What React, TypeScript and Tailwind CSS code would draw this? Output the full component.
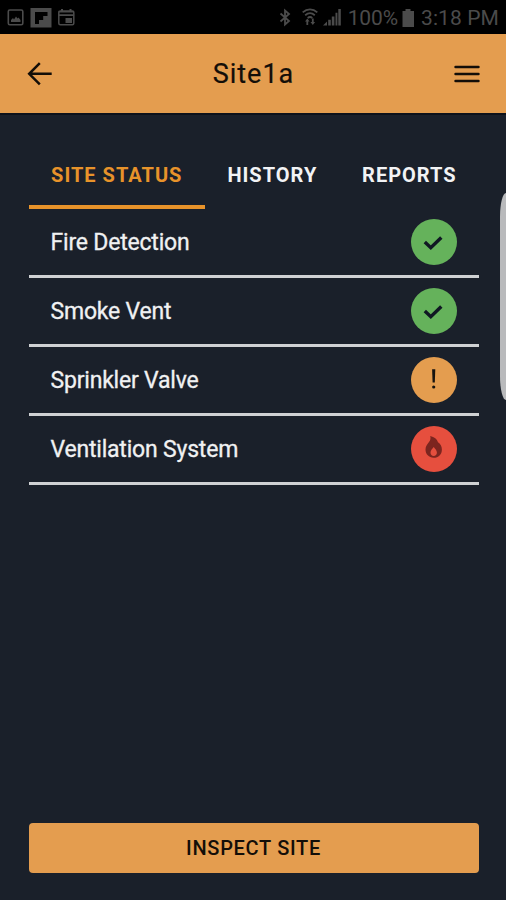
import type { ReactNode } from 'react';

const tabs = [
  { label: 'SITE STATUS', active: true },
  { label: 'HISTORY', active: false },
  { label: 'REPORTS', active: false },
];

const systems = [
  { name: 'Fire Detection', status: 'ok' },
  { name: 'Smoke Vent', status: 'ok' },
  { name: 'Sprinkler Valve', status: 'warning' },
  { name: 'Ventilation System', status: 'alarm' },
];

const statusColors: Record<string, string> = {
  ok: 'bg-[#65b25b]',
  warning: 'bg-[#e49d4f]',
  alarm: 'bg-[#e64f3e]',
};

const statusIcons: Record<string, ReactNode> = {
  ok: (
    <path
      d="M13.8 23l6 5.7 10.5-10.2"
      fill="none"
      stroke="#101823"
      strokeWidth="3.4"
    />
  ),
  warning: (
    <g fill="#17130f">
      <path d="M21.1 12.3h3.2l-.5 13.2h-2.2z" />
      <circle cx="22.7" cy="30" r="1.6" />
    </g>
  ),
  alarm: (
    <path
      fillRule="evenodd"
      fill="#7c251f"
      d="M19.2 10c4.2 1 6.8 3.2 7.8 6.2 2.4 1.5 3.9 4 3.9 7.2 0 4.9-3.4 8.4-8.2 8.4s-8.2-3.5-8.2-8.2c0-3.3 1.7-5.4 3.5-7.6 1.4-1.7 1.9-3.7 1.2-6zm3.5 11c-1.7 2-3.2 3.7-3.2 5.8 0 1.9 1.4 3.2 3.2 3.2s3.2-1.3 3.2-3.2c0-2.1-1.5-3.8-3.2-5.8z"
    />
  ),
};

const StatusBar = () => (
  <div className="flex h-[34px] items-center justify-between bg-black pt-[2px] pr-[7px] pl-[7px] text-[#4b4b4b]">
    <svg width="70" height="22" viewBox="0 0 70 22" fill="none">
      <rect x="1.3" y="3" width="14.5" height="14.8" rx="1.5" stroke="currentColor" strokeWidth="1.6" />
      <path d="M4 15v-2l2-2 1 1.5L9 9.5l1.5 2 1-1 2 2.5v2z" fill="currentColor" />
      <path d="M23.5 1h21v19.5h-21z" fill="currentColor" />
      <path d="M28 5h12.5v4h-4.3v4H32v4h-4z" fill="black" />
      <rect x="51.8" y="4" width="15" height="13.8" rx="1.5" stroke="currentColor" strokeWidth="1.5" />
      <path d="M51.5 4h15.6v1.5H51.5zM51.5 7.3h15.6v1.8H51.5zM54 2h2v3h-2zM62.5 2h2v3h-2zM58.5 11h6.5v5h-6.5z" fill="currentColor" />
    </svg>
    <div className="flex items-center">
      <svg width="66" height="22" viewBox="0 0 66 22" fill="none">
        <path d="M1.5 6.5l8.5 7.5-4 3.5v-14l4 3.5-8.5 7.5" stroke="currentColor" strokeWidth="1.8" />
        <path d="M23.7 5.4c4.4-4 10.2-4 14.6 0M26.2 8.2c3-2.6 6.6-2.6 9.6 0M28.7 11c1.4-1.2 3.2-1.2 4.6 0" stroke="currentColor" strokeWidth="1.8" />
        <path d="M26 14.6l2.3-3 2.3 3h-1.4V18h-1.8v-3.4zM31.5 15h1.4v-3.4h1.8V15h1.4l-2.3 3z" fill="currentColor" />
        <path d="M44 18.5l4-4v4zM49.2 12.8h2.6v5.7h-2.6zM52.8 9.5h2.6v9h-2.6zM56.5 5.8h1.9v12.7h-1.9zM59.3 2h2.5v16.5h-2.5z" fill="currentColor" />
      </svg>
      <span className="ml-[3px] pt-[2px] text-[21px] tracking-[-0.1px]">100%</span>
      <svg width="13" height="20" viewBox="0 0 13 20" className="ml-[4px]">
        <path d="M3.5 1h5v2H12v16H.5V3h3z" fill="currentColor" />
      </svg>
      <span className="ml-[6px] pt-[2px] text-[21px] tracking-[0.1px]">3:18 PM</span>
    </div>
  </div>
);

const Header = () => (
  <header className="flex h-[79px] items-center justify-between bg-[#e49d4f] pr-[26px] pl-[27px] text-[#130e08]">
    <svg width="26" height="26" viewBox="0 0 26 26" fill="none" stroke="currentColor" strokeWidth="2.5">
      <path d="M24.7 12.8H2.5M12.8 2.2L2.2 12.8l10.6 10.6" />
    </svg>
    <h1 className="pt-px text-[27px] tracking-[1px] [-webkit-text-stroke:0.2px_#130e08]">Site1a</h1>
    <svg width="26" height="26" viewBox="0 0 26 26" fill="none" stroke="currentColor" strokeWidth="2.4" strokeLinecap="round">
      <path d="M1.5 6h23M1.5 13h23M1.5 20h23" />
    </svg>
  </header>
);

const App = () => {
  return (
    <div className="relative flex h-[900px] w-[506px] flex-col overflow-hidden bg-[#1a202a] font-[Roboto,sans-serif]">
      <StatusBar />
      <Header />
      <div className="h-[2px] bg-[#0d121b]" />
      <main className="flex flex-1 flex-col pt-[26px] pr-[27.5px] pb-[27.5px] pl-[28.5px]">
        <nav className="flex h-[68px] w-[450px]">
          {tabs.map((tab) => (
            <button
              key={tab.label}
              className={
                tab.active
                  ? 'border-b-4 border-[#e8932a] px-[22.6px] pt-1 text-[20px] font-bold tracking-[1px] whitespace-nowrap text-[#e8932a]'
                  : 'border-b-4 border-transparent px-[22.4px] pt-1 text-[20px] font-bold tracking-[1px] whitespace-nowrap text-[#f2f3f5]'
              }
            >
              {tab.label}
            </button>
          ))}
        </nav>
        <ul>
          {systems.map((system) => (
            <li
              key={system.name}
              className="flex h-[69px] items-center justify-between border-b-[3px] border-[#cfd1d3] pr-[22px] pl-[22px]"
            >
              <span className="pt-[3px] text-[23px] tracking-[-0.2px] text-[#f0f1f2] [-webkit-text-stroke:0.3px_#f0f1f2]">
                {system.name}
              </span>
              <div className={`h-[46px] w-[46px] rounded-full ${statusColors[system.status]}`}>
                <svg width="46" height="46" viewBox="0 0 46 46">
                  {statusIcons[system.status]}
                </svg>
              </div>
            </li>
          ))}
        </ul>
        <button className="mt-auto h-[49.5px] w-full rounded bg-[#e49d4f] text-[20px] font-medium tracking-[0.7px] text-[#130e08]">
          INSPECT SITE
        </button>
      </main>
      {/* edge panel handle */}
      <div className="absolute top-[193px] right-0 h-[207px] w-[6px] rounded-l-[6px_24px] bg-[#b9babc]" />
    </div>
  );
};

export default App;
